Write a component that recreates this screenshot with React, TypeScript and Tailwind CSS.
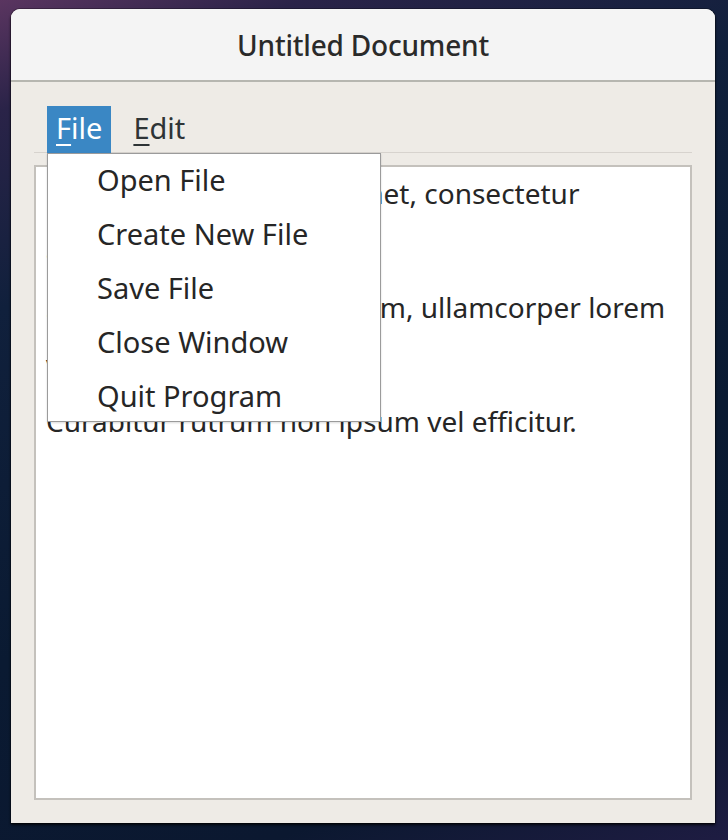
import React from "react";

const font = { fontFamily: '"Noto Sans", "Open Sans", sans-serif' };

function Mnemonic({ ch, rest }: { ch: string; rest: string }) {
  return (
    <span>
      <span className="underline decoration-[2px] underline-offset-[5px]">{ch}</span>
      {rest}
    </span>
  );
}

export default function App() {
  const items = ["Open File", "Create New File", "Save File", "Close Window", "Quit Program"];
  return (
    <div className="w-[728px] h-[840px] overflow-hidden pt-[9px] pl-[11px] bg-[linear-gradient(160deg,#5a3560_0%,#2a2348_10%,#10203c_28%,#0a1a32_60%,#0b1830_85%,#1e1c42_100%)] font-['Noto_Sans',sans-serif]">
      <div className="relative w-[704px] h-[814px] rounded-t-[9px] bg-[#eeebe6] shadow-[0_2px_3px_rgba(0,0,0,0.8),0_0_0_1px_rgba(0,0,0,0.25)] flex flex-col text-[#2e3436]">
        <div className="h-[73px] rounded-t-[9px] bg-[#f4f4f4] border-b-2 border-[#b6b6b0] flex items-center justify-center shrink-0">
          <span className="text-[28px] font-medium tracking-[-0.2px] text-[#2a2a2a]">Untitled Document</span>
        </div>
        <div className="flex-1 flex flex-col px-[23px] pb-[23px]">
          <div className="mt-[24px] h-[47px] border-b border-[#d7d3ce] flex items-stretch pl-[13px] shrink-0">
            <div className="h-[47px] px-[9px] bg-[#3a87c4] text-white text-[29px] leading-[44px]">
              <Mnemonic ch="F" rest="ile" />
            </div>
            <div className="h-[46px] pl-[22px] text-[29px] leading-[44px]">
              <Mnemonic ch="E" rest="dit" />
            </div>
          </div>
          <div className="mt-[12px] flex-1 bg-white border-2 border-[#c4c1bc] px-[10px] text-[28px] leading-[57px] text-[#262626] overflow-hidden">
            <div className="-mt-[2px]">
              <div>Lorem ipsum dolor sit amet, consectetur</div>
              <div>adipiscing elit.</div>
              <div>Sed nec elementum dictum, ullamcorper lorem</div>
              <div>vitae tempus.</div>
              <div>Curabitur rutrum non ipsum vel efficitur.</div>
            </div>
          </div>
        </div>
        <div className="absolute left-[36px] top-[144px] w-[334px] h-[269px] bg-white border border-[#9b9b9b] shadow-[0_1px_2px_rgba(0,0,0,0.15)] pt-0">
          {items.map((t) => (
            <div key={t} className="h-[54px] leading-[52px] pl-[49px] text-[29px] text-[#262626]" style={font}>
              {t}
            </div>
          ))}
        </div>
      </div>
    </div>
  );
}
